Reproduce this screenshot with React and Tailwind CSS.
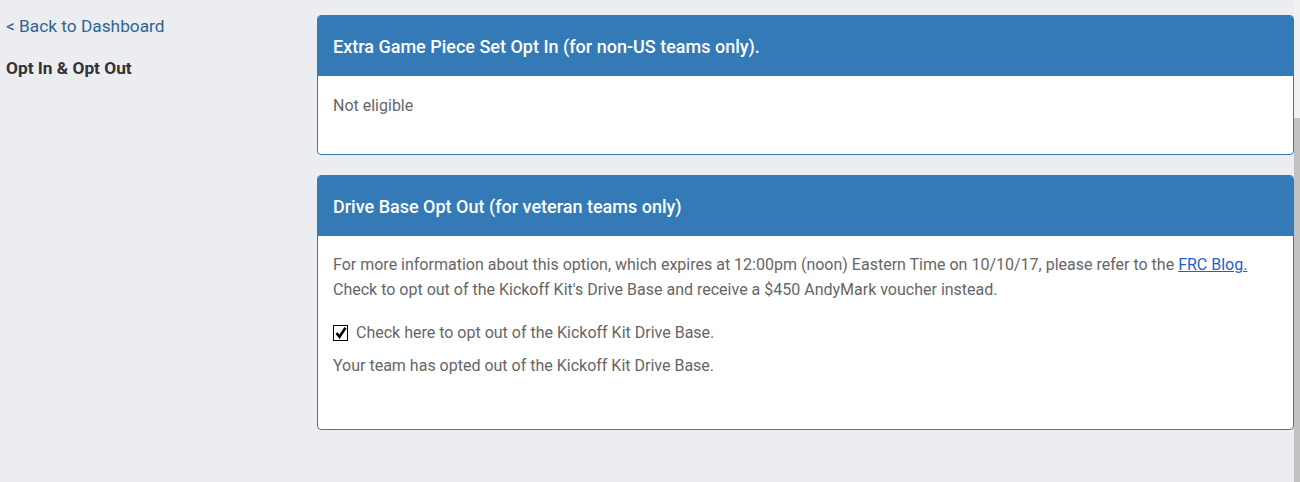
import React from 'react';

// Panel con encabezado azul
const Panel = ({ title, children, bodyClass }) => (
  <div className="rounded border border-[#337ab7] bg-white overflow-hidden">
    <div className="h-[60px] flex items-center px-[15px] bg-[#337ab7] text-white text-[18px] font-medium">
      {title}
    </div>
    <div className={`px-[15px] text-[#666] text-[16px] leading-[24px] ${bodyClass}`}>{children}</div>
  </div>
);

export default function App() {
  return (
    <div className="flex min-h-[482px] bg-[#ecedf1] font-['Roboto',sans-serif]">
      <aside className="w-[317px] shrink-0 pl-[6px] pt-[14px]">
        <a href="#" className="block text-[17.3px] leading-[24px] text-[#2f6496]">
          &lt; Back to Dashboard
        </a>
        <div className="mt-[18px] text-[17.3px] leading-[24px] font-bold text-[#333]">Opt In &amp; Opt Out</div>
      </aside>

      <main className="flex-1 pt-[15px] flex flex-col gap-[20px]">
        <Panel title="Extra Game Piece Set Opt In (for non-US teams only)." bodyClass="pt-[18px] h-[78px]">
          <p>Not eligible</p>
        </Panel>

        <Panel title="Drive Base Opt Out (for veteran teams only)" bodyClass="pt-[16px] h-[193px]">
          <p className="leading-[25px]">
            For more information about this option, which expires at 12:00pm (noon) Eastern Time on 10/10/17, please refer to the{' '}
            <a href="#" className="text-[#1a5fd6] underline">FRC Blog.</a>
            <br />
            Check to opt out of the Kickoff Kit's Drive Base and receive a $450 AndyMark voucher instead.
          </p>
          <label className="mt-[19px] flex items-center gap-[8px]">
            <span className="w-[15px] h-[16px] border-[1.5px] border-black bg-white flex items-center justify-center">
              <svg viewBox="0 0 12 12" className="w-[12px] h-[12px]">
                <path d="M1.5 6 L4.5 9.8 L10.5 0.8" fill="none" stroke="black" strokeWidth="2.6" />
              </svg>
            </span>
            <span>Check here to opt out of the Kickoff Kit Drive Base.</span>
          </label>
          <p className="mt-[9px]">Your team has opted out of the Kickoff Kit Drive Base.</p>
        </Panel>
      </main>

      <div className="w-[6px] shrink-0 flex flex-col">
        <div className="h-[118px] bg-[#f1f1f1]" />
        <div className="flex-1 bg-[#c1c1c1]" />
      </div>
    </div>
  );
}
